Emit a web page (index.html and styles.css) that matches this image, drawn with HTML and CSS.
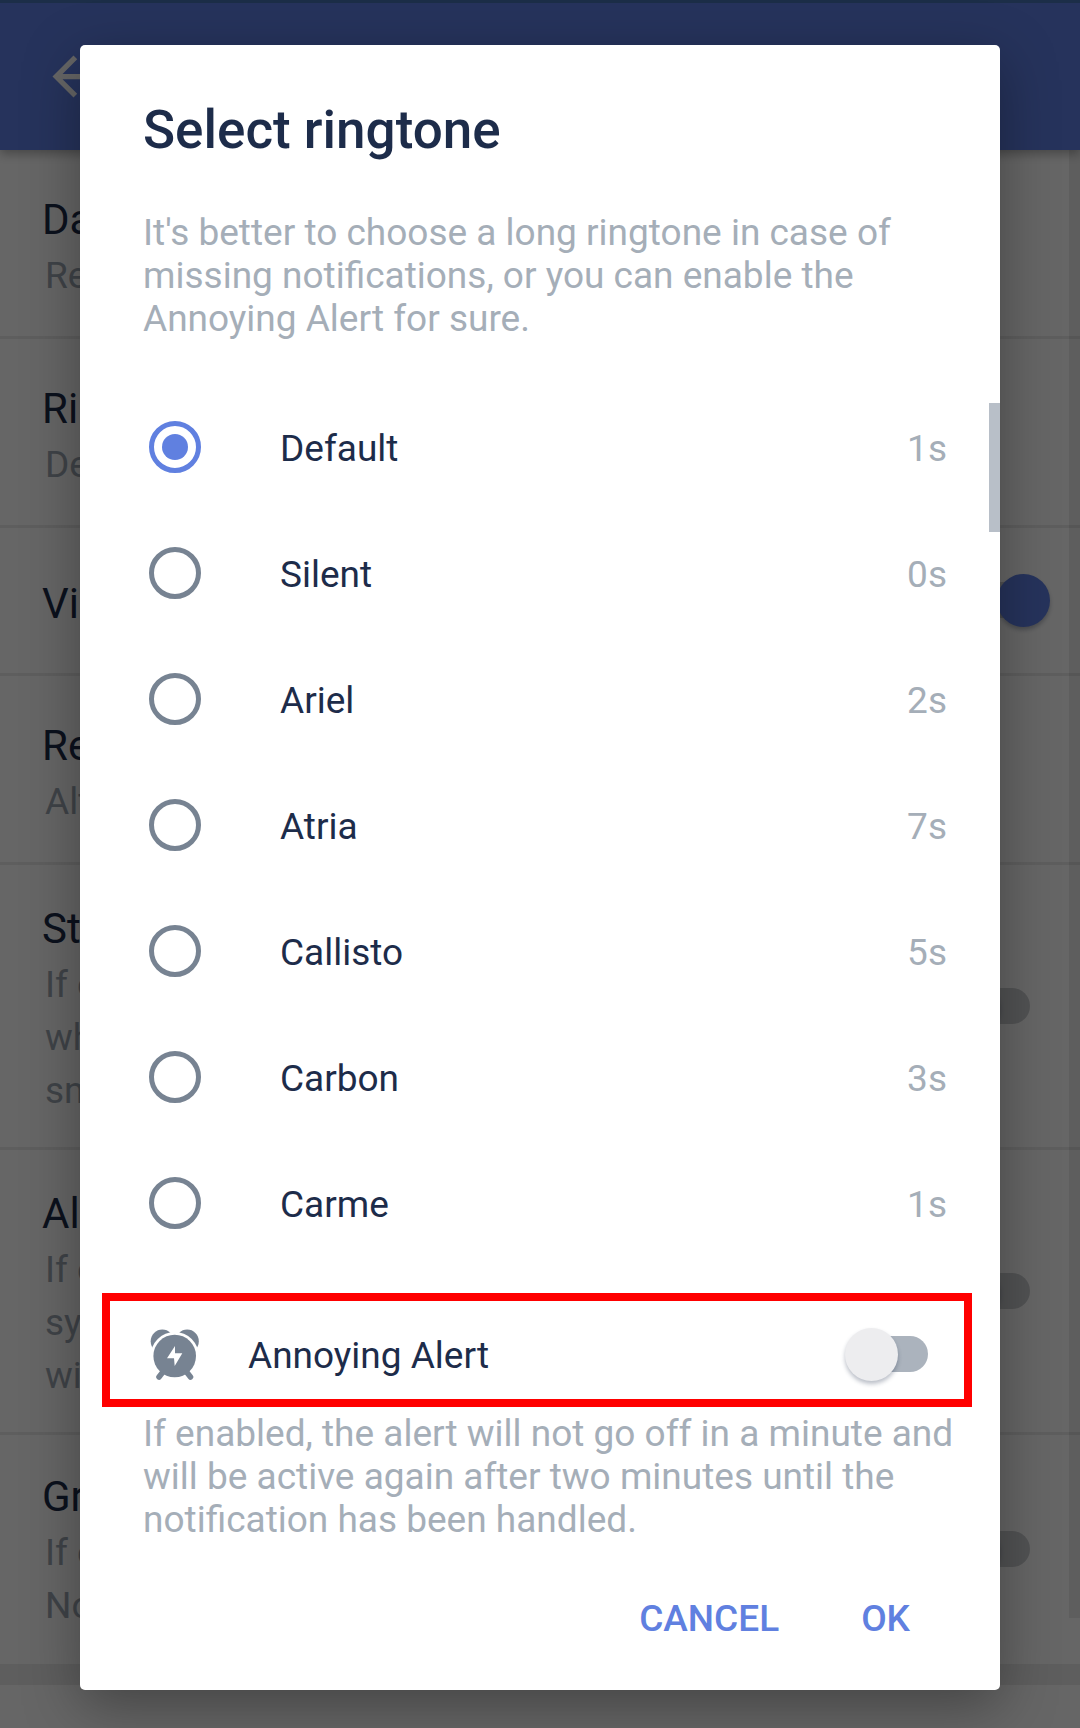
FILE: index.html
```html
<!DOCTYPE html>
<html lang="en">
<head>
<meta charset="utf-8">
<meta name="viewport" content="width=device-width, initial-scale=1">
<title>Select ringtone</title>
<link rel="stylesheet" href="styles.css">
</head>
<body>
<div class="screen">
  <div class="settings" inert>
    <header class="app-bar">
      <button class="back" type="button" aria-label="Back">
        <svg viewBox="0 0 24 24" aria-hidden="true"><path d="M20 11H7.83l5.59-5.59L12 4l-8 8 8 8 1.41-1.41L7.83 13H20z"/></svg>
      </button>
    </header>
    <main class="rows">
      <section class="row">
        <div class="row-text"><h2 class="row-title">Da</h2><p class="row-note">Re</p></div>
      </section>
      <section class="row">
        <div class="row-text"><h2 class="row-title">Ri</h2><p class="row-note">De</p></div>
      </section>
      <section class="row row-single">
        <div class="row-text"><h2 class="row-title">Vi</h2></div>
        <input class="switch" type="checkbox" role="switch" aria-label="Vi" checked>
      </section>
      <section class="row">
        <div class="row-text"><h2 class="row-title">Re</h2><p class="row-note">Alt</p></div>
      </section>
      <section class="row row-long">
        <div class="row-text"><h2 class="row-title">St</h2><p class="row-note">If c<br>wh<br>sn</p></div>
        <input class="switch" type="checkbox" role="switch" aria-label="St">
      </section>
      <section class="row row-long">
        <div class="row-text"><h2 class="row-title">Al</h2><p class="row-note">If c<br>sy<br>wi</p></div>
        <input class="switch" type="checkbox" role="switch" aria-label="Al">
      </section>
      <section class="row row-last">
        <div class="row-text"><h2 class="row-title">Gr</h2><p class="row-note">If c<br>No</p></div>
        <input class="switch" type="checkbox" role="switch" aria-label="Gr">
      </section>
      <div class="page-scroll"></div>
    </main>
  </div>

  <div class="backdrop">
    <form class="dialog" role="dialog" aria-labelledby="dialog-title">
      <h1 class="dialog-title" id="dialog-title">Select ringtone</h1>
      <p class="hint hint-top">It's better to choose a long ringtone in case of missing notifications, or you can enable the Annoying Alert for sure.</p>

      <div class="tones" role="radiogroup" aria-labelledby="dialog-title">
        <label class="tone"><input class="radio" type="radio" name="tone" checked><span class="tone-name">Default</span><span class="tone-time">1s</span></label>
        <label class="tone"><input class="radio" type="radio" name="tone"><span class="tone-name">Silent</span><span class="tone-time">0s</span></label>
        <label class="tone"><input class="radio" type="radio" name="tone"><span class="tone-name">Ariel</span><span class="tone-time">2s</span></label>
        <label class="tone"><input class="radio" type="radio" name="tone"><span class="tone-name">Atria</span><span class="tone-time">7s</span></label>
        <label class="tone"><input class="radio" type="radio" name="tone"><span class="tone-name">Callisto</span><span class="tone-time">5s</span></label>
        <label class="tone"><input class="radio" type="radio" name="tone"><span class="tone-name">Carbon</span><span class="tone-time">3s</span></label>
        <label class="tone"><input class="radio" type="radio" name="tone"><span class="tone-name">Carme</span><span class="tone-time">1s</span></label>
        <div class="tones-scroll"></div>
      </div>

      <div class="alert">
        <svg class="alert-icon" viewBox="0 0 52 52" aria-hidden="true">
          <g fill="#778392">
            <circle cx="13.3" cy="13.2" r="11.6"/>
            <circle cx="38.2" cy="13.2" r="11.6"/>
          </g>
          <circle cx="25.7" cy="28" r="24" fill="#fff"/>
          <path d="M10 49l7-9M41.5 49l-7-9" stroke="#778392" stroke-width="5.6" stroke-linecap="round"/>
          <circle cx="25.7" cy="28" r="21.3" fill="#778392"/>
          <path d="M26 18l-8 12.3h7l.7 7.7 7.6-12.7H26z" fill="#fff"/>
        </svg>
        <label class="alert-name" for="annoying">Annoying Alert</label>
        <input class="switch" type="checkbox" role="switch" id="annoying">
      </div>
      <p class="hint hint-alert">If enabled, the alert will not go off in a minute and will be active again after two minutes until the notification has been handled.</p>

      <div class="actions">
        <button class="action" type="button">CANCEL</button>
        <button class="action" type="button">OK</button>
      </div>
    </form>
  </div>
</div>
</body>
</html>
```
FILE: styles.css
```css
* {
  box-sizing: border-box;
}

body {
  margin: 0;
  background: #fff;
  color: #1d2c4a;
  font-family: Roboto, "Liberation Sans", sans-serif;
  font-size: 37px;
  line-height: 43px;
}

h1, h2, p {
  margin: 0;
}

button {
  padding: 0;
  border: 0;
  background: none;
  font: inherit;
}

.screen {
  position: relative;
  min-height: 100vh;
}

/* Settings page behind the dialog */

.app-bar {
  position: relative;
  z-index: 1;
  display: flex;
  align-items: center;
  height: 150px;
  padding-left: 42px;
  border-top: 3px solid #4673b4;
  background: #5f80e6;
  box-shadow: 0 4px 10px rgba(0, 0, 0, 0.3);
}

.back,
.back svg {
  display: block;
  width: 63px;
  height: 63px;
  fill: #fff;
}

.rows {
  position: relative;
}

.row {
  display: flex;
  align-items: center;
  justify-content: space-between;
  min-height: 189px;
  padding: 0 30px 0 42px;
  border-bottom: 3px solid #ebebeb;
}

.row-single {
  min-height: 148px;
}

.row-long {
  min-height: 285px;
}

.row-last {
  min-height: 250px;
  border-bottom: 21px solid #ebebeb;
}

.row-text {
  padding-top: 6px;
}

.row-long .row-text {
  padding-top: 4px;
}

.row-last .row-text {
  padding-top: 0;
}

.row-title {
  font-size: 42px;
  font-weight: 400;
  line-height: 58px;
}

.row-note {
  padding-left: 3px;
  color: #9fa9b3;
  line-height: 53px;
}

.page-scroll {
  position: absolute;
  top: 0;
  right: 0;
  bottom: 67px;
  width: 11px;
  background: rgba(0, 0, 0, 0.08);
}

/* Switch */

.switch {
  position: relative;
  flex: none;
  width: 103px;
  height: 53px;
  margin: 0;
  appearance: none;
}

.switch::before {
  content: "";
  position: absolute;
  inset: 8px 20px 9px;
  border-radius: 18px;
  background: #abb3bd;
}

.switch::after {
  content: "";
  position: absolute;
  top: 0;
  left: 0;
  width: 53px;
  height: 53px;
  border-radius: 50%;
  background: #ededef;
  box-shadow: 0 3px 4px rgba(29, 44, 74, 0.3);
}

.row .switch::before {
  background: #cdcfd2;
}

.switch:checked::after {
  left: 50px;
  background: #5f80e6;
}

/* Dialog */

.backdrop {
  position: absolute;
  inset: 0;
  z-index: 2;
  padding: 45px 80px 38px;
  background: rgba(0, 0, 0, 0.6);
}

.dialog {
  padding: 54px 0 50px;
  border-radius: 5px;
  background: #fff;
  box-shadow: 0 16px 56px rgba(0, 0, 0, 0.34);
}

.dialog-title {
  padding: 0 63px;
  font-size: 53px;
  font-weight: 500;
  line-height: 62px;
}

.hint {
  padding: 0 42px 0 63px;
  color: #a5aeb8;
}

.hint-top {
  margin-top: 50px;
}

.hint-alert {
  margin-top: 5px;
}

.tones {
  position: relative;
  margin-top: 44px;
}

.tone {
  display: flex;
  align-items: center;
  gap: 79px;
  height: 126px;
  padding: 0 53px 0 69px;
}

.tone-name,
.tone-time,
.alert-name {
  padding-top: 2px;
}

.tone-name {
  flex: 1;
}

.tone-time {
  color: #a5aeb8;
}

.radio {
  display: grid;
  place-items: center;
  flex: none;
  width: 52px;
  height: 52px;
  margin: 0;
  border: 5px solid #778392;
  border-radius: 50%;
  appearance: none;
}

.radio:checked {
  border-color: #6080e0;
}

.radio:checked::after {
  content: "";
  width: 26px;
  height: 26px;
  border-radius: 50%;
  background: #6080e0;
}

.tones-scroll {
  position: absolute;
  top: 19px;
  right: 0;
  width: 11px;
  height: 129px;
  background: #b8bfc8;
}

.alert {
  display: flex;
  align-items: center;
  gap: 47px;
  height: 114px;
  margin: 27px 28px 0 22px;
  padding: 8px 16px 0 39px;
  border: 8px solid #f00;
}

.alert-icon {
  flex: none;
  width: 52px;
  height: 52px;
}

.alert-name {
  flex: 1;
}

.actions {
  display: flex;
  justify-content: flex-end;
  gap: 82px;
  margin-top: 56px;
  padding-right: 90px;
}

.action {
  color: #6080e0;
  font-weight: 500;
}
```
